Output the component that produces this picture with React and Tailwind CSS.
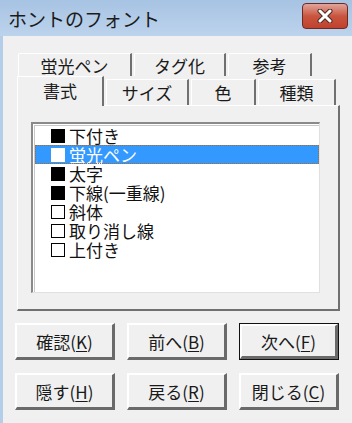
import React from "react"

const font = { fontFamily: '"Noto Sans CJK JP", "Noto Sans", sans-serif' }

const items = [
  { on: true, label: "下付き" },
  { on: true, label: "蛍光ペン", selected: true },
  { on: true, label: "太字" },
  { on: true, label: "下線(一重線)" },
  { on: false, label: "斜体" },
  { on: false, label: "取り消し線" },
  { on: false, label: "上付き" },
]

function BackTab({ label, w }) {
  return (
    <div
      className={`${w} h-[23px] flex items-center justify-center border-t border-l border-white border-r-2 border-r-[#707070] rounded-tl-[2px] bg-[#f0f0f0] text-[17px] leading-none text-[#1a1a1a]`}
    >
      {label}
    </div>
  )
}

function FrontTab({ label, w, active }) {
  return active ? (
    <div
      className={`${w} h-[30px] -mb-[1px] relative z-10 flex items-start justify-center pt-[5px] border-t border-l border-white border-r-2 border-r-[#707070] bg-[#f0f0f0] text-[17px] leading-none text-[#1a1a1a]`}
    >
      {label}
    </div>
  ) : (
    <div
      className={`${w} h-[26px] mt-[3px] flex items-center justify-center border-t border-l border-white border-r-2 border-r-[#707070] bg-[#f0f0f0] text-[17px] leading-none text-[#1a1a1a]`}
    >
      {label}
    </div>
  )
}

function Btn({ label, k, isDefault }) {
  const inner = (
    <div className="w-full h-full flex items-center justify-center border-t-2 border-l-2 border-white border-r-[3px] border-b-[3px] border-r-[#6a6a6a] border-b-[#6a6a6a] bg-[#f0f0f0] text-[17px] leading-none text-[#1a1a1a]">
      <span>
        {label}(<span className="underline underline-offset-2">{k}</span>)
      </span>
    </div>
  )
  return isDefault ? (
    <div className="w-[100px] h-[37px] border border-[#111]">{inner}</div>
  ) : (
    <div className="w-[100px] h-[37px]">{inner}</div>
  )
}

export default function App() {
  return (
    <div className="w-[352px] h-[423px] flex flex-col bg-[#b4cde8] overflow-hidden" style={font}>
      {/* タイトルバー */}
      <div className="h-[36px] flex items-center justify-between pl-[8px] pr-[4px] bg-gradient-to-b from-[#a7c3e3] to-[#bcd3ec]">
        <span className="text-[19px] leading-none text-[#1b1b1b]">ホントのフォント</span>
        <div className="w-[46px] h-[26px] -mt-[4px] flex items-center justify-center rounded-[4px] border border-[#6b2a25] bg-gradient-to-b from-[#e0a49a] via-[#c9553f] to-[#c0412d]">
          <svg width="16" height="14" viewBox="0 0 16 14">
            <path d="M3 2 L13 12 M13 2 L3 12" stroke="#4a2a28" strokeWidth="5" strokeLinecap="round" />
            <path d="M3 2 L13 12 M13 2 L3 12" stroke="#ffffff" strokeWidth="3" strokeLinecap="round" />
          </svg>
        </div>
      </div>

      {/* 本体 */}
      <div className="flex-1 ml-[3px] bg-[#f0f0f0] flex flex-col pl-[12px] pt-[17px]">
        {/* 後ろのタブ */}
        <div className="flex gap-[2px] pl-[3px]">
          <BackTab label="蛍光ペン" w="w-[114px]" />
          <BackTab label="タグ化" w="w-[92px]" />
          <BackTab label="参考" w="w-[84px]" />
        </div>

        {/* 前のタブ */}
        <div className="flex gap-[2px] pl-[2px]">
          <FrontTab label="書式" w="w-[87px]" active />
          <FrontTab label="サイズ" w="w-[83px]" />
          <FrontTab label="色" w="w-[65px]" />
          <FrontTab label="種類" w="w-[78px]" />
        </div>

        {/* パネル */}
        <div className="ml-[2px] w-[323px] h-[206px] border-t border-l border-white border-r-2 border-b-2 border-r-[#707070] border-b-[#707070] pl-[13px] pt-[16px]">
          <div className="w-[289px] h-[171px] border-t-2 border-l-2 border-[#8a8a8a] border-r border-b border-r-[#e0e0e0] border-b-[#e0e0e0] bg-white pt-[1px] pl-[1px]">
            <div className="border-t border-l border-[#c8c8c8] h-full">
              {items.map((it) => (
                <div
                  key={it.label}
                  className={`h-[19px] flex items-center text-[17px] leading-none ${
                    it.selected
                      ? "bg-[#3399ff] text-white outline outline-1 outline-dotted outline-[#b06a20] -outline-offset-1 w-[284px]"
                      : "text-[#111]"
                  }`}
                >
                  <span
                    className={`ml-[16px] mr-[4px] w-[14px] h-[14px] ${
                      it.selected ? "bg-white" : it.on ? "bg-black" : "border border-black bg-white"
                    }`}
                  />
                  <span>{it.label}</span>
                </div>
              ))}
            </div>
          </div>
        </div>

        {/* ボタン */}
        <div className="mt-[12px] grid grid-cols-[100px_100px_100px] gap-x-[12px] gap-y-[13px]">
          <Btn label="確認" k="K" />
          <Btn label="前へ" k="B" />
          <Btn label="次へ" k="F" isDefault />
          <Btn label="隠す" k="H" />
          <Btn label="戻る" k="R" />
          <Btn label="閉じる" k="C" />
        </div>
      </div>
    </div>
  )
}
